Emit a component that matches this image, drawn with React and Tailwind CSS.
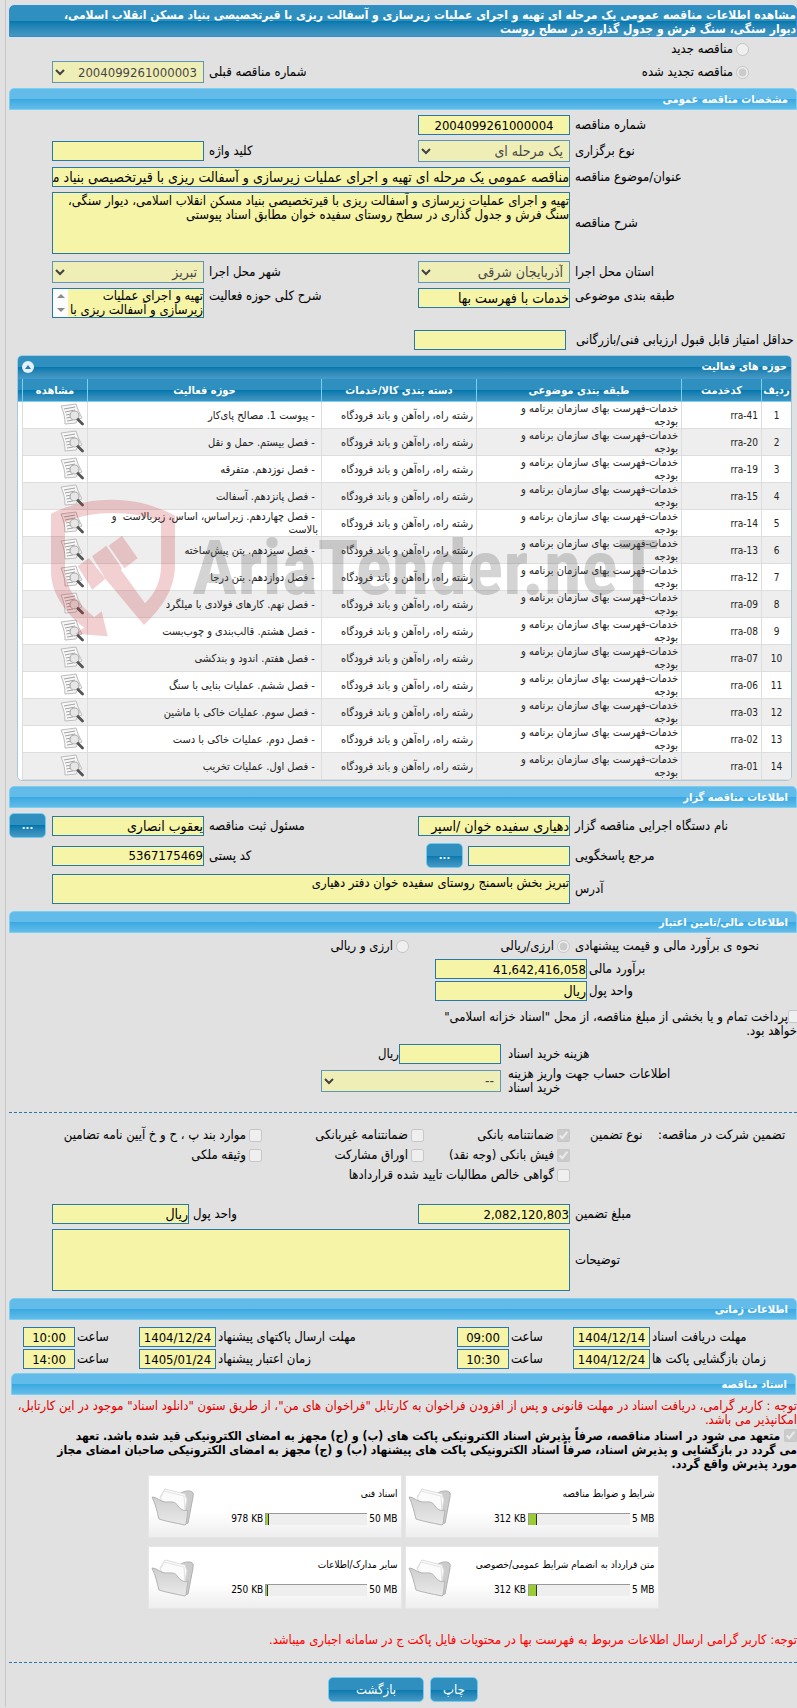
import { useId } from 'react';
import clsx from 'clsx';

const activities = [
  { code: 'rra-41', scope: 'پیوست 1. مصالح پای‌کار' },
  { code: 'rra-20', scope: 'فصل بیستم. حمل و نقل' },
  { code: 'rra-19', scope: 'فصل نوزدهم. متفرقه' },
  { code: 'rra-15', scope: 'فصل پانزدهم. آسفالت' },
  { code: 'rra-14', scope: 'فصل چهاردهم. زیراساس، اساس، زیربالاست \u00a0و\nبالاست' },
  { code: 'rra-13', scope: 'فصل سیزدهم. بتن پیش‌ساخته' },
  { code: 'rra-12', scope: 'فصل دوازدهم. بتن درجا' },
  { code: 'rra-09', scope: 'فصل نهم. کارهای فولادی با میلگرد' },
  { code: 'rra-08', scope: 'فصل هشتم. قالب‌بندی و چوب‌بست' },
  { code: 'rra-07', scope: 'فصل هفتم. اندود و بندکشی' },
  { code: 'rra-06', scope: 'فصل ششم. عملیات بنایی با سنگ' },
  { code: 'rra-03', scope: 'فصل سوم. عملیات خاکی با ماشین' },
  { code: 'rra-02', scope: 'فصل دوم. عملیات خاکی با دست' },
  { code: 'rra-01', scope: 'فصل اول. عملیات تخریب' },
];

const documents = [
  { title: 'شرایط و ضوابط مناقصه', max: '5 MB', used: '312 KB', percent: 8 },
  { title: 'اسناد فنی', max: '50 MB', used: '978 KB', percent: 3 },
  { title: 'متن قرارداد به انضمام شرایط عمومی/خصوصی', max: '5 MB', used: '312 KB', percent: 8 },
  { title: 'سایر مدارک/اطلاعات', max: '50 MB', used: '250 KB', percent: 2 },
];

const formRow = 'grid grid-cols-[227px_minmax(0,1fr)_214px_minmax(0,1fr)_43px] items-center';
const labelStyle = 'pe-[5px] text-end whitespace-nowrap';
const darkBar = 'bg-linear-to-b from-[#2f90bf] from-50% via-[#0078ae] via-50% to-[#4599c2]';
const headCell = 'border-e border-b border-[#78d0f5]';
const bodyCell = 'border-e border-b border-[#dddddd]';

function SectionHeader({ children, className }) {
  return (
    <h2
      className={clsx(
        'h-[22px] rounded-t-[5px] border border-[#78d0f5] bg-linear-to-b from-[#62bbe9] from-50% via-[#38a8e1] via-50% to-[#63bde9] px-2 text-[11px] leading-[22px] font-bold text-white',
        className,
      )}
    >
      {children}
    </h2>
  );
}

// numbers are set one step smaller than Persian text
function TextInput({ className, numeric = false, ...props }) {
  return (
    <input
      type="text"
      readOnly
      className={clsx(
        'h-5 min-w-0 border border-[#2779aa] bg-[#f6f4a6] text-black outline-none',
        numeric ? 'text-[13px]' : 'text-[14px]',
        className,
      )}
      {...props}
    />
  );
}

function TextArea({ className, ...props }) {
  return (
    <textarea
      readOnly
      className={clsx(
        'block w-full resize-none overflow-hidden border border-[#2779aa] bg-[#f6f4a6] leading-[14px] text-black outline-none',
        className,
      )}
      {...props}
    />
  );
}

function Select({ value, className, numeric = false, ...props }) {
  return (
    <select
      disabled
      className={clsx(
        'h-[22px] min-w-0 border border-[#2779aa] bg-[#f6f4a6] px-[2px] text-black disabled:opacity-70',
        numeric ? 'text-[13px]' : 'text-[14px]',
        className,
      )}
      {...props}
    >
      <option>{value}</option>
    </select>
  );
}

function Choice({ type = 'checkbox', label, className, ...props }) {
  return (
    <label className={clsx('flex items-center gap-[3px] whitespace-nowrap', className)}>
      <input type={type} disabled readOnly className="size-[13px] shrink-0" {...props} />
      <span>{label}</span>
    </label>
  );
}

function Button({ children, className, ...props }) {
  return (
    <button
      type="button"
      className={clsx('h-[25px] rounded-[5px] border border-[#70cbf2] text-white', darkBar, className)}
      {...props}
    >
      {children}
    </button>
  );
}

function ViewIcon() {
  return (
    <svg width="24" height="24" viewBox="0 0 24 24" fill="none">
      <path d="m1 3 15-2 2 6 4 8-4 1-2 4-11 1c0-6-1-11-4-18Z" fill="#f7f7f7" stroke="#bcbcbc" />
      <path d="m4 6 11-2M5 9l10-2M6 12l5-1M6.500 15l4-.7M7 18l6-1" stroke="#a2a2a2" />
      <circle cx="14.500" cy="12.500" r="4.500" fill="#e6e6e6" stroke="#acacac" strokeWidth="1.200" />
      <path d="m18 16.500 4.500 4.500" stroke="#555" strokeWidth="2.800" strokeLinecap="round" />
    </svg>
  );
}

function FolderIcon() {
  return (
    <svg width="44" height="40" viewBox="0 0 44 40" className="shrink-0">
      <defs>
        <linearGradient id="folderFront" x1="0" y1="0" x2="0" y2="1">
          <stop offset="0" stopColor="#cfcfcf" />
          <stop offset="1" stopColor="#e9e9e9" />
        </linearGradient>
      </defs>
      <path d="M30 6c3-2 9-3 11-1 2 1 1 3 1 5l-5 26-4 1Z" fill="#cccccc" stroke="#b0b0b0" />
      <path d="M9 10 14 2l20 5 2 6-3 14-20-8Z" fill="#fbfbfb" stroke="#dcdcdc" />
      <path d="M10 10 13 4l20 5 1 14" fill="none" stroke="#e3e3e3" />
      <path
        d="M1 10c5 0 7 4 13 5 7 0 10-1 13 4 4 5 7 5 10 4l-2 14-1 1C24 36 14 34 8 32 6 25 5 18 1 10Z"
        fill="url(#folderFront)"
        stroke="#b3b3b3"
      />
    </svg>
  );
}

function Watermark() {
  return (
    <div dir="ltr" aria-hidden="true" className="pointer-events-none absolute top-[143px] left-[33px] flex items-center gap-4">
      <svg width="125" height="138" viewBox="150 478 375 414" fill="#c4232f" fillOpacity="0.22">
        <path d="M150 522C210 492 270 480 335 480c65 0 127 16 187 48v152c-2 70-38 124-93 176L313 717l-40-67 43-32 47 68-3 5 72 100c32-30 48-70 48-111V545c-45-17-95-25-145-25-50 0-100 8-143 28v142c0 52 38 100 88 142l22-17 18 75-98-8 28-18c-60-46-100-104-100-170Z" />
        <path d="m323 618 40-30 47 68-40 30ZM230 680l34-25 49 62-39 33Z" />
      </svg>
      <span className="font-['Roboto_Condensed','Open_Sans_Condensed','Noto_Sans_Condensed','Liberation_Sans',sans-serif] text-[76px] leading-none font-bold text-[#555]/25">
        AriaTender.neT
      </span>
    </div>
  );
}

function ActivityTable() {
  return (
    <section className="relative ms-[5px] me-2 overflow-hidden rounded-[5px] border border-[#a6c9e2] bg-white">
      <div className={clsx('flex h-[23px] items-center justify-between border-b border-[#4297d7] px-1 text-[11px] font-bold text-white', darkBar)}>
        <h2>حوزه های فعالیت</h2>
        <button type="button" aria-label="بستن" className="grid size-3 place-items-center rounded-full bg-[#e4f1fb]">
          <svg width="6" height="4" viewBox="0 0 6 4" fill="#2779aa">
            <path d="M3 0 6 4H0Z" />
          </svg>
        </button>
      </div>
      <div className={clsx('absolute top-[23px] left-0 h-[23px] w-1 border-b border-[#78d0f5]', darkBar)} />
      <div className="pe-1">
        <table className="w-full table-fixed border-separate border-spacing-0 text-[11px] leading-[13px] text-[#222]">
          <thead className="text-white">
            <tr className={clsx('h-[23px]', darkBar)}>
              <th className={clsx(headCell, 'w-[30px]')}>ردیف</th>
              <th className={clsx(headCell, 'w-20')}>کدخدمت</th>
              <th className={clsx(headCell, 'w-[205px]')}>طبقه بندی موضوعی</th>
              <th className={clsx(headCell, 'w-[155px]')}>دسته بندی کالا/خدمات</th>
              <th className={headCell}>حوزه فعالیت</th>
              <th className={clsx(headCell, 'w-[65px]')}>مشاهده</th>
            </tr>
          </thead>
          <tbody>
            {activities.map((item, index) => (
              <tr key={item.code} className="h-[27px] even:bg-[#eeeeee]">
                <td className={clsx(bodyCell, 'text-center text-[10px]')}>{index + 1}</td>
                <td className={clsx(bodyCell, 'px-[3px] text-[10px]')}>{item.code}</td>
                <td className={clsx(bodyCell, 'ps-[3px] pe-6')}>خدمات-فهرست بهای سازمان برنامه و بودجه</td>
                <td className={clsx(bodyCell, 'ps-[3px] whitespace-nowrap')}>رشته راه، راه‌آهن و باند فرودگاه</td>
                <td className={clsx(bodyCell, 'px-[3px] whitespace-pre-line')}>&nbsp;- {item.scope}</td>
                <td className={clsx(bodyCell, 'px-[3px]')}>
                  <button type="button" aria-label={`مشاهده ${item.code}`} className="block">
                    <ViewIcon />
                  </button>
                </td>
              </tr>
            ))}
          </tbody>
        </table>
      </div>
      <Watermark />
    </section>
  );
}

function DeadlineRow({ items }) {
  const id = useId();
  return (
    <div className="grid grid-cols-[147px_77px_64px_52px_1fr_77px_64px_52px] items-center pe-[14px]">
      {items.map(({ label, date, time }, i) => (
        <div key={label} className="contents">
          <label htmlFor={`${id}-date-${i}`} className="pe-[2px] text-end whitespace-nowrap">{label}</label>
          <TextInput numeric id={`${id}-date-${i}`} defaultValue={date} className="text-center" />
          <label htmlFor={`${id}-time-${i}`} className="pe-[2px] text-end">ساعت</label>
          <TextInput numeric id={`${id}-time-${i}`} defaultValue={time} className="text-center" />
        </div>
      ))}
    </div>
  );
}

function DocumentCard({ title, max, used, percent }) {
  return (
    <div className="flex h-[63px] w-[254px] items-center justify-between border border-[#e6e6e6] bg-linear-to-b from-white from-60% to-[#eeeeee] ps-[3px] pe-[2px] text-[10px]">
      <div>
        <h3 className="whitespace-nowrap">{title}</h3>
        <div className="mt-[11px] flex items-center gap-[2px]">
          <span dir="ltr">{max}</span>
          <div dir="ltr" className="h-3 w-[102px] border-t border-l border-[#999] bg-[#eeeeee]">
            <div className="h-full border-r border-[#333] bg-[#9acd32]" style={{ width: `${percent}%` }} />
          </div>
          <span dir="ltr">{used}</span>
        </div>
      </div>
      <FolderIcon />
    </div>
  );
}

export default function App() {
  return (
    <div dir="rtl" className="min-h-screen overflow-x-hidden bg-[#e1e1e1] pe-[5px] font-['DejaVu_Sans_Condensed','DejaVu_Sans',sans-serif] text-[13px] leading-[14px] text-black">
      <main className="border-e border-[#c8c8c8] pt-[5px] pe-[3px] pb-[5px]">
        <h1 className={clsx('h-8 rounded-t-[5px] border border-[#2e8fd8] pt-[2px] text-[12px] leading-[14px] font-bold text-white', darkBar)}>
          مشاهده اطلاعات مناقصه عمومی یک مرحله ای تهیه و اجرای عملیات زیرسازی و آسفالت ریزی با قیرتخصیصی بنیاد مسکن انقلاب اسلامی،
          <br />
          دیوار سنگی، سنگ فرش و جدول گذاری در سطح روست
        </h1>

        <div className="flex flex-col gap-px pt-px pb-[5px]">
          <Choice type="radio" name="tenderKind" label="مناقصه جدید" className="h-[22px] ps-12" />
          <div className={formRow}>
            <Choice type="radio" name="tenderKind" defaultChecked label="مناقصه تجدید شده" className="col-span-2 ps-12" />
            <label htmlFor="previousNo" className={labelStyle}>شماره مناقصه قبلی</label>
            <Select numeric id="previousNo" value="2004099261000003" />
          </div>
        </div>

        <SectionHeader>مشخصات مناقصه عمومی</SectionHeader>
        <div className="flex flex-col gap-[5px] py-[5px]">
          <div className={formRow}>
            <label htmlFor="tenderNo" className={labelStyle}>شماره مناقصه</label>
            <TextInput numeric id="tenderNo" defaultValue="2004099261000004" className="text-center" />
          </div>
          <div className={formRow}>
            <label htmlFor="holdingType" className={labelStyle}>نوع برگزاری</label>
            <Select id="holdingType" value="یک مرحله ای" />
            <label htmlFor="keyword" className={labelStyle}>کلید واژه</label>
            <TextInput id="keyword" />
          </div>
          <div className={formRow}>
            <label htmlFor="subject" className={labelStyle}>عنوان/موضوع مناقصه</label>
            <TextInput
              id="subject"
              className="col-span-3"
              defaultValue="مناقصه عمومی یک مرحله ای تهیه و اجرای عملیات زیرسازی و آسفالت ریزی با قیرتخصیصی بنیاد مسکن انقلاب اسلامی"
            />
          </div>
          <div className={formRow}>
            <label htmlFor="description" className={labelStyle}>شرح مناقصه</label>
            <TextArea
              id="description"
              className="col-span-3 h-[62px] pt-px"
              defaultValue={'تهیه و اجرای عملیات زیرسازی و آسفالت ریزی با قیرتخصیصی بنیاد مسکن انقلاب اسلامی، دیوار سنگی،\nسنگ فرش و جدول گذاری در سطح روستای سفیده خوان مطابق اسناد پیوستی'}
            />
          </div>
          <div className={clsx(formRow, 'pt-[2px]')}>
            <label htmlFor="province" className={labelStyle}>استان محل اجرا</label>
            <Select id="province" value="آذربایجان شرقی" />
            <label htmlFor="city" className={labelStyle}>شهر محل اجرا</label>
            <Select id="city" value="تبریز" />
          </div>
          <div className="grid grid-cols-[227px_minmax(0,1fr)_214px_minmax(0,1fr)_43px] items-start">
            <label htmlFor="category" className={clsx(labelStyle, 'pt-px')}>طبقه بندی موضوعی</label>
            <TextInput id="category" defaultValue="خدمات با فهرست بها" />
            <label htmlFor="scopeSummary" className={clsx(labelStyle, 'pt-px')}>شرح کلی حوزه فعالیت</label>
            <div className="relative">
              <TextArea id="scopeSummary" className="h-[30px] whitespace-pre" defaultValue={'تهیه و اجرای عملیات\nزیرسازی و آسفالت ریزی با'} />
              <div className="absolute top-px left-px flex h-7 w-[15px] flex-col items-center justify-between bg-[#fcfcfc] py-[5px]">
                <svg width="8" height="4" viewBox="0 0 8 4" fill="#8b8b8b"><path d="M4 0 8 4H0Z" /></svg>
                <svg width="8" height="4" viewBox="0 0 8 4" fill="#8b8b8b"><path d="M0 0h8L4 4Z" /></svg>
              </div>
            </div>
          </div>
          <div className="flex items-center gap-[10px] pt-[7px]">
            <label htmlFor="minScore" className="w-[221px] text-end whitespace-nowrap">
              حداقل امتیاز قابل قبول ارزیابی فنی/بازرگانی
            </label>
            <TextInput id="minScore" className="w-[152px]" />
          </div>
        </div>

        <ActivityTable />

        <SectionHeader className="mt-[5px]">اطلاعات مناقصه گزار</SectionHeader>
        <div className="flex flex-col gap-[5px] pt-[5px] pb-[7px]">
          <div className={formRow}>
            <label htmlFor="agency" className={labelStyle}>نام دستگاه اجرایی مناقصه گزار</label>
            <TextInput id="agency" defaultValue="دهیاری سفیده خوان /اسپر" />
            <label htmlFor="registrar" className={labelStyle}>مسئول ثبت مناقصه</label>
            <TextInput id="registrar" defaultValue="یعقوب انصاری" />
            <Button className="ms-[6px] w-[37px] text-[11px] font-bold">...</Button>
          </div>
          <div className={formRow}>
            <label htmlFor="contact" className={labelStyle}>مرجع پاسخگویی</label>
            <div className="flex items-center gap-[5px]">
              <TextInput id="contact" className="flex-1" />
              <Button className="me-2 w-[37px] text-[11px] font-bold">...</Button>
            </div>
            <label htmlFor="postalCode" className={labelStyle}>کد پستی</label>
            <TextInput numeric id="postalCode" defaultValue="5367175469" />
          </div>
          <div className={clsx(formRow, 'pt-px')}>
            <label htmlFor="address" className={labelStyle}>آدرس</label>
            <TextArea id="address" className="col-span-3 h-[30px] pt-px" defaultValue="تبریز بخش باسمنج روستای سفیده خوان دفتر دهیاری" />
          </div>
        </div>

        <SectionHeader>اطلاعات مالی/تامین اعتبار</SectionHeader>
        <div role="radiogroup" aria-labelledby="currencyLabel" className="flex h-[26px] items-center">
          <span id="currencyLabel" className="w-[227px] pe-[5px] text-end">نحوه ی برآورد مالی و قیمت پیشنهادی</span>
          <Choice type="radio" name="currency" defaultChecked label="ارزی/ریالی" className="w-[161px]" />
          <Choice type="radio" name="currency" label="ارزی و ریالی" />
        </div>
        <div className="grid grid-cols-[208px_152px] items-center gap-[2px]">
          <label htmlFor="estimate" className="text-end">برآورد مالی</label>
          <TextInput numeric id="estimate" defaultValue="41,642,416,058" />
          <label htmlFor="estimateUnit" className="text-end">واحد پول</label>
          <TextInput id="estimateUnit" defaultValue="ریال" />
        </div>
        <label className="mt-[9px] block w-[365px]">
          <input type="checkbox" disabled className="-ms-1 size-[13px] align-[-2px]" />
          پرداخت تمام و یا بخشی از مبلغ مناقصه، از محل "اسناد خزانه اسلامی" خواهد بود.
        </label>
        <div className="mt-[6px] flex items-center">
          <label htmlFor="docFee" className="w-[296px] pe-[7px] text-end">هزینه خرید اسناد</label>
          <TextInput id="docFee" className="w-[102px]" />
          <span>ریال</span>
        </div>
        <div className="mt-[3px] flex items-center">
          <label htmlFor="account" className="w-[296px] pe-[7px] text-end">
            اطلاعات حساب جهت واریز هزینه
            <br />
            خرید اسناد
          </label>
          <Select id="account" value="--" className="w-[180px]" />
        </div>

        <hr className="mt-[17px] border-t border-dashed border-[#2779aa]" />

        <div role="group" aria-labelledby="guaranteeLabel" className="flex pt-3">
          <span id="guaranteeLabel" className="w-[139px] pt-[3px] text-end whitespace-nowrap">تضمین شرکت در مناقصه:</span>
          <span className="w-[88px] pe-5 pt-[3px] text-end">نوع تضمین</span>
          <div className="grid auto-rows-[20px] grid-cols-[146px_162px_auto] items-center">
            <Choice defaultChecked label="ضمانتنامه بانکی" />
            <Choice label="ضمانتنامه غیربانکی" />
            <Choice label="موارد بند پ ، ح و خ آیین نامه تضامین" />
            <Choice defaultChecked label="فیش بانکی (وجه نقد)" />
            <Choice label="اوراق مشارکت" />
            <Choice label="وثیقه ملکی" />
            <Choice label="گواهی خالص مطالبات تایید شده قراردادها" className="col-span-2" />
          </div>
        </div>

        <div className="flex flex-col gap-[5px] pt-[19px] pb-[7px]">
          <div className={formRow}>
            <label htmlFor="guaranteeAmount" className={labelStyle}>مبلغ تضمین</label>
            <TextInput numeric id="guaranteeAmount" defaultValue="2,082,120,803" />
            <div className="col-span-2 flex items-center">
              <label htmlFor="guaranteeUnit" className="w-[229px] pe-1 text-end">واحد پول</label>
              <TextInput id="guaranteeUnit" defaultValue="ریال" className="flex-1" />
            </div>
          </div>
          <div className={formRow}>
            <label htmlFor="notes" className={labelStyle}>توضیحات</label>
            <TextArea id="notes" className="col-span-3 h-[62px]" />
          </div>
        </div>

        <SectionHeader>اطلاعات زمانی</SectionHeader>
        <div className="flex flex-col gap-[2px] pt-[7px] pb-1">
          <DeadlineRow
            items={[
              { label: 'مهلت دریافت اسناد', date: '1404/12/14', time: '09:00' },
              { label: 'مهلت ارسال پاکتهای پیشنهاد', date: '1404/12/24', time: '10:00' },
            ]}
          />
          <DeadlineRow
            items={[
              { label: 'زمان بازگشایی پاکت ها', date: '1404/12/24', time: '10:30' },
              { label: 'زمان اعتبار پیشنهاد', date: '1405/01/24', time: '14:00' },
            ]}
          />
        </div>

        <SectionHeader className="ms-px me-[2px]">اسناد مناقصه</SectionHeader>
        <p className="pt-[4px] text-[#e00000]">
          توجه : کاربر گرامی، دریافت اسناد در مهلت قانونی و پس از افزودن فراخوان به کارتابل "فراخوان های من"، از طریق ستون "دانلود اسناد" موجود در این کارتابل،
          <br />
          امکانپذیر می باشد.
        </p>
        <label className="mt-[2px] block text-[12px] font-bold">
          <input type="checkbox" disabled defaultChecked className="size-[13px] align-[-2px]" /> متعهد می شود در اسناد مناقصه، صرفاً
          پذیرش اسناد الکترونیکی پاکت های (ب) و (ج) مجهز به امضای الکترونیکی قید شده باشد. تعهد
          <br />
          می گردد در بازگشایی و پذیرش اسناد، صرفاً اسناد الکترونیکی پاکت های پیشنهاد (ب) و (ج) مجهز به امضای الکترونیکی صاحبان امضای مجاز
          <br />
          مورد پذیرش واقع گردد.
        </label>

        <div className="mt-1 flex justify-center">
          <div className="grid grid-cols-2 gap-x-[3px] gap-y-2">
            {documents.map((doc) => (
              <DocumentCard key={doc.title} {...doc} />
            ))}
          </div>
        </div>

        <p className="mt-6 text-[#ff0000]">
          توجه: کاربر گرامی ارسال اطلاعات مربوط به فهرست بها در محتویات فایل پاکت ج در سامانه اجباری میباشد.
        </p>
        <hr className="mt-[15px] border-t border-dashed border-[#2779aa]" />
        <div className="flex justify-center gap-[6px] pt-[14px]">
          <Button className="w-12">چاپ</Button>
          <Button className="w-24">بازگشت</Button>
        </div>
      </main>
    </div>
  );
}
